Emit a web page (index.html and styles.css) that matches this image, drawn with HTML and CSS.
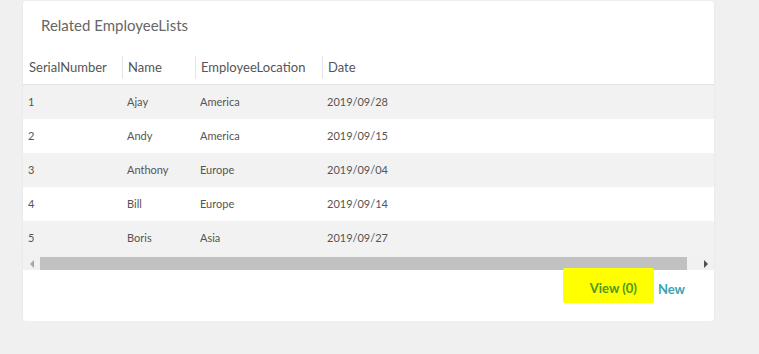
FILE: index.html
```html
<!DOCTYPE html>
<html>

<head>
    <title>Related EmployeeLists</title>
    <link rel="stylesheet" href="styles.css">
</head>

<body>
    <div class='card'>
        <div class='card-title'>Related EmployeeLists</div>
        <div class='table-wrap'>
            <table class='grid'>
                <colgroup>
                    <col class='col-serial'>
                    <col class='col-name'>
                    <col class='col-location'>
                    <col>
                </colgroup>
                <thead>
                    <tr>
                        <th><div class='th-label first'>SerialNumber</div></th>
                        <th><div class='th-label'>Name</div></th>
                        <th><div class='th-label'>EmployeeLocation</div></th>
                        <th><div class='th-label'>Date</div></th>
                    </tr>
                </thead>
                <tbody>
                    <tr><td>1</td><td>Ajay</td><td>America</td><td>2019/09/28</td></tr>
                    <tr><td>2</td><td>Andy</td><td>America</td><td>2019/09/15</td></tr>
                    <tr><td>3</td><td>Anthony</td><td>Europe</td><td>2019/09/04</td></tr>
                    <tr><td>4</td><td>Bill</td><td>Europe</td><td>2019/09/14</td></tr>
                    <tr><td>5</td><td>Boris</td><td>Asia</td><td>2019/09/27</td></tr>
                </tbody>
            </table>
            <div class='scrollbar'>
                <div class='scroll-btn'><span class='arrow-left'></span></div>
                <div class='scroll-thumb'></div>
                <div class='scroll-btn'><span class='arrow-right'></span></div>
            </div>
        </div>
        <div class='card-footer'>
            <a class='link view'>View (0)</a>
            <a class='link new'>New</a>
        </div>
    </div>
</body>

</html>
```

FILE: styles.css
```css
body {
    font-family: Lato, "Open Sans", sans-serif;
    background-color: #f0f0f0;
    margin: 0;
    padding: 1px 0 0 23px;
}

.card {
    width: 691px;
    height: 320px;
    background-color: #fff;
    border-radius: 3px;
    box-shadow: 0 1px 2px rgba(0, 0, 0, 0.08);
    display: flex;
    flex-direction: column;
}

.card-title {
    font-size: 15px;
    color: #666;
    padding: 15px 18px 0;
    height: 36px;
    line-height: 18px;
}

.table-wrap {
    background-color: #f1f1f1;
}

.grid {
    width: 100%;
    border-collapse: collapse;
    table-layout: fixed;
}

.col-serial {
    width: 99px;
}

.col-name {
    width: 73px;
}

.col-location {
    width: 127px;
}

.grid thead tr {
    background-color: #fff;
    border-bottom: 1px solid #e2e2e2;
}

.grid th {
    padding: 4px 0 5px;
    text-align: left;
    font-weight: normal;
    font-size: 13px;
    color: #555;
}

.th-label {
    border-left: 1px solid #e4e4e4;
    padding: 0 5px;
    line-height: 23px;
}

.th-label.first {
    border-left-color: transparent;
}

.grid td {
    height: 33px;
    padding: 0 0 1px 5px;
    font-size: 11px;
    color: #555;
}

.grid tbody tr:nth-child(odd) {
    background-color: #f2f2f2;
}

.grid tbody tr:nth-child(even) {
    background-color: #fff;
}

.scrollbar {
    display: flex;
    height: 13px;
    margin-top: 2px;
    background-color: #f1f1f1;
}

.scroll-btn {
    width: 17px;
    display: flex;
    align-items: center;
    justify-content: center;
}

.scroll-thumb {
    flex: 1;
    background-color: #c1c1c1;
    margin-right: 10px;
}

.arrow-left,
.arrow-right {
    width: 0;
    height: 0;
    border-top: 4px solid transparent;
    border-bottom: 4px solid transparent;
}

.arrow-left {
    border-right: 4px solid #a3a3a3;
}

.arrow-right {
    border-left: 4px solid #505050;
}

.card-footer {
    display: flex;
    justify-content: flex-end;
    align-items: flex-start;
    padding-right: 29px;
    flex: 1;
}

.link {
    font-size: 13px;
    font-weight: bold;
    line-height: 16px;
    padding-top: 11px;
}

.view {
    background-color: #ffff00;
    color: #4b9a1e;
    padding: 12px 17px 7px 27px;
    margin-top: -2px;
    margin-right: 4px;
    border-radius: 2px;
}

.new {
    color: #3ba3b5;
}
```
